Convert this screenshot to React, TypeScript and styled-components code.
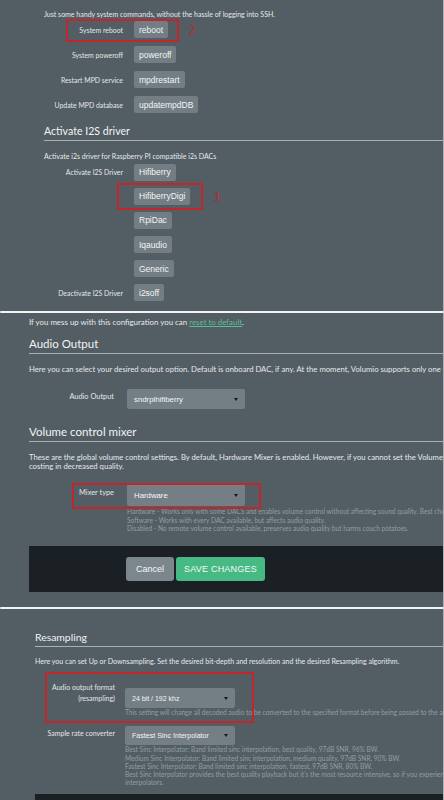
import React from "react";
import styled, { createGlobalStyle } from "styled-components";

const GlobalStyle = createGlobalStyle`
  html, body {
    margin: 0;
    padding: 0;
    background: #525d64;
  }
  body {
    width: 444px;
    overflow: hidden;
    font-family: Lato, "Open Sans", sans-serif;
    color: #e6e9eb;
  }
`;

const Page = styled.div`
  display: flex;
  flex-direction: column;
  width: 444px;
  height: 800px;
  overflow: hidden;
`;

const Panel = styled.section<{ $left: number; $top: number; $bottom: number }>`
  display: flex;
  flex-direction: column;
  align-items: stretch;
  flex: 0 0 auto;
  background: #525d64;
  border-right: 1px solid #adb3b7;
  padding: ${(p) => p.$top}px 0 ${(p) => p.$bottom}px ${(p) => p.$left}px;
  white-space: nowrap;
  overflow: hidden;
`;

const LastPanel = styled(Panel)`
  flex: 1 1 auto;
`;

const Divider = styled.div`
  flex: 0 0 auto;
  height: 2px;
  background: #f3f4f4;
  border-radius: 1px;
`;

const Title = styled.h2<{ $size: number; $mt: number; $lh: number }>`
  margin: ${(p) => p.$mt}px 0 0;
  font-weight: 400;
  font-size: ${(p) => p.$size}px;
  line-height: ${(p) => p.$lh}px;
  color: #f2f4f5;
  padding-bottom: 2px;
  border-bottom: 1px solid #a9b0b4;
`;

const Note = styled.p<{ $size: number; $mt?: number; $lh?: number }>`
  margin: ${(p) => p.$mt ?? 0}px 0 0;
  font-size: ${(p) => p.$size}px;
  line-height: ${(p) => p.$lh ?? 10}px;
`;

const ResetLink = styled.a`
  color: #5bbd93;
  text-decoration: underline;
`;

const Stack = styled.div<{ $gap: number; $mt: number }>`
  display: flex;
  flex-direction: column;
  gap: ${(p) => p.$gap}px;
  margin-top: ${(p) => p.$mt}px;
`;

const Row = styled.div<{ $label: number; $gap: number; $mt?: number }>`
  position: relative;
  display: grid;
  grid-template-columns: ${(p) => p.$label}px auto;
  column-gap: ${(p) => p.$gap}px;
  align-items: start;
  justify-content: start;
  margin-top: ${(p) => p.$mt ?? 0}px;
`;

const Label = styled.span<{ $size: number; $pt: number; $lh?: number }>`
  text-align: right;
  font-size: ${(p) => p.$size}px;
  line-height: ${(p) => p.$lh ?? 10}px;
  padding-top: ${(p) => p.$pt}px;
  color: #e3e7e9;
`;

const CommandButton = styled.span`
  display: inline-flex;
  align-items: center;
  justify-self: start;
  height: 17px;
  padding: 0 5px;
  border-radius: 2px;
  background: #727d84;
  font-family: "Liberation Sans", Arial, sans-serif;
  font-size: 8.5px;
  color: #f3f5f6;
`;

const Control = styled.div<{ $mt?: number }>`
  display: flex;
  flex-direction: column;
  margin-top: ${(p) => p.$mt ?? 0}px;
`;

const Select = styled.div<{ $w: number; $h: number; $size: number }>`
  display: flex;
  align-items: center;
  justify-content: space-between;
  box-sizing: border-box;
  width: ${(p) => p.$w}px;
  height: ${(p) => p.$h}px;
  padding: 0 7px;
  border-radius: 2px;
  background: #737e85;
  font-family: "Liberation Sans", Arial, sans-serif;
  font-size: ${(p) => p.$size}px;
  color: #f5f6f7;
`;

const Caret = styled.span`
  width: 0;
  height: 0;
  border-left: 2.5px solid transparent;
  border-right: 2.5px solid transparent;
  border-top: 3px solid #15191c;
`;

const Help = styled.p<{ $lh: number; $mt?: number }>`
  margin: ${(p) => p.$mt ?? 0}px 0 0;
  font-size: 6.6px;
  line-height: ${(p) => p.$lh}px;
  color: #939da3;
`;

const ActionBar = styled.div<{ $mt: number; $h: number; $pl: number }>`
  display: flex;
  align-items: center;
  gap: 2px;
  flex: 0 0 auto;
  height: ${(p) => p.$h}px;
  margin-top: ${(p) => p.$mt}px;
  padding-left: ${(p) => p.$pl}px;
  background: #1b2025;
`;

const ActionButton = styled.span<{ $primary?: boolean; $w: number }>`
  display: inline-flex;
  align-items: center;
  justify-content: center;
  width: ${(p) => p.$w}px;
  height: 24px;
  border-radius: 3px;
  background: ${(p) => (p.$primary ? "#47b982" : "#7c878d")};
  font-family: "Liberation Sans", Arial, sans-serif;
  font-size: 9px;
  letter-spacing: ${(p) => (p.$primary ? "0.2px" : "0")};
  color: #f6f8f8;
`;

/* red callout boxes drawn over a settings row */
const Callout = styled.div<{ $l: number; $t: number; $w: number; $h: number }>`
  position: absolute;
  left: ${(p) => p.$l}px;
  top: ${(p) => p.$t}px;
  width: ${(p) => p.$w}px;
  height: ${(p) => p.$h}px;
  box-sizing: border-box;
  border: 2px solid #c1262d;
  pointer-events: none;
`;

const CalloutNumber = styled.span<{ $dx: number }>`
  position: absolute;
  left: calc(100% + ${(p) => p.$dx}px);
  top: 50%;
  transform: translateY(-50%);
  font-family: "Liberation Sans", Arial, sans-serif;
  font-size: 12px;
  color: #c8232b;
`;

const commands = [
  { label: "System reboot", action: "reboot" },
  { label: "System poweroff", action: "poweroff" },
  { label: "Restart MPD service", action: "mpdrestart" },
  { label: "Update MPD database", action: "updatempdDB" },
];

const drivers = [
  { label: "Activate I2S Driver", action: "Hifiberry" },
  { label: "", action: "HifiberryDigi" },
  { label: "", action: "RpiDac" },
  { label: "", action: "Iqaudio" },
  { label: "", action: "Generic" },
  { label: "Deactivate I2S Driver", action: "i2soff" },
];

const SystemPanel = () => (
  <Panel $left={44} $top={9} $bottom={10}>
    <Note $size={7}>Just some handy system commands, without the hassle of logging into SSH.</Note>
    <Stack $gap={8} $mt={2}>
      {commands.map((c, i) => (
        <Row key={c.action} $label={79} $gap={11}>
          <Label $size={6.9} $pt={3.5}>{c.label}</Label>
          <CommandButton>{c.action}</CommandButton>
          {i === 0 && (
            <Callout $l={22} $t={-2.5} $w={113} $h={23}>
              <CalloutNumber $dx={12}>2</CalloutNumber>
            </Callout>
          )}
        </Row>
      ))}
    </Stack>
    <Title $size={10.6} $lh={14} $mt={11}>Activate I2S driver</Title>
    <Note $size={7} $mt={10}>Activate i2s driver for Raspberry PI compatible i2s DACs</Note>
    <Stack $gap={7.2} $mt={2.5}>
      {drivers.map((d, i) => (
        <Row key={d.action} $label={79} $gap={11}>
          <Label $size={6.9} $pt={3.5}>{d.label}</Label>
          <CommandButton>{d.action}</CommandButton>
          {i === 1 && (
            <Callout $l={73} $t={-4.7} $w={86} $h={27}>
              <CalloutNumber $dx={13}>1</CalloutNumber>
            </Callout>
          )}
        </Row>
      ))}
    </Stack>
  </Panel>
);

const PlaybackPanel = () => (
  <Panel $left={29} $top={4} $bottom={15}>
    <Note $size={7.9}>
      If you mess up with this configuration you can <ResetLink>reset to default</ResetLink>.
    </Note>
    <Title $size={11.5} $lh={15} $mt={8.5}>Audio Output</Title>
    <Note $size={7.7} $mt={10.5}>
      Here you can select your desired output option. Default is onboard DAC, if any. At the moment, Volumio supports only one Output at a time.
    </Note>
    <Row $label={85} $gap={13} $mt={15}>
      <Label $size={7.4} $pt={3}>Audio Output</Label>
      <Select $w={118} $h={20} $size={7.8}>
        sndrpihifiberry
        <Caret />
      </Select>
    </Row>
    <Title $size={11.5} $lh={15} $mt={14.5}>Volume control mixer</Title>
    <Note $size={7.7} $mt={11} $lh={9}>
      These are the global volume control settings. By default, Hardware Mixer is enabled. However, if you cannot set the Volume, switch to the Software Mixer,
      <br />
      costing in decreased quality.
    </Note>
    <Row $label={85} $gap={13} $mt={13.5}>
      <Label $size={7.4} $pt={4}>Mixer type</Label>
      <Control>
        <Select $w={118} $h={22} $size={7.8}>
          Hardware
          <Caret />
        </Select>
        <Help $lh={8.5} $mt={1}>
          Hardware - Works only with some DACS and enables volume control without affecting sound quality. Best choice if available.
          <br />
          Software - Works with every DAC available, but affects audio quality.
          <br />
          Disabled - No remote volume control available, preserves audio quality but harms couch potatoes.
        </Help>
      </Control>
      <Callout $l={43} $t={-1} $w={189} $h={26} />
    </Row>
    <ActionBar $mt={13.5} $h={46} $pl={97}>
      <ActionButton $w={48}>Cancel</ActionButton>
      <ActionButton $primary $w={89}>SAVE CHANGES</ActionButton>
    </ActionBar>
  </Panel>
);

const ResamplingPanel = () => (
  <LastPanel $left={35} $top={21} $bottom={0}>
    <Title $size={10.4} $lh={14} $mt={0}>Resampling</Title>
    <Note $size={7.05} $mt={10}>
      Here you can set Up or Downsampling. Set the desired bit-depth and resolution and the desired Resampling algorithm.
    </Note>
    <Row $label={80} $gap={10} $mt={15}>
      <Label $size={7} $pt={0} $lh={10.5}>
        Audio output format
        <br />
        (resampling)
      </Label>
      <Control $mt={6}>
        <Select $w={110} $h={20} $size={7}>
          24 bit / 192 khz
          <Caret />
        </Select>
        <Help $lh={8}>
          This setting will change all decoded audio to be converted to the specified format before being passed to the audio output.
        </Help>
      </Control>
      <Callout $l={10} $t={-10} $w={209} $h={51} />
    </Row>
    <Row $label={80} $gap={10} $mt={10}>
      <Label $size={7} $pt={2}>Sample rate converter</Label>
      <Control>
        <Select $w={110} $h={19} $size={7.1}>
          Fastest Sinc Interpolator
          <Caret />
        </Select>
        <Help $lh={8.2}>
          Best Sinc Interpolator: Band limited sinc interpolation, best quality, 97dB SNR, 96% BW.
          <br />
          Medium Sinc Interpolator: Band limited sinc interpolation, medium quality, 97dB SNR, 90% BW.
          <br />
          Fastest Sinc Interpolator: Band limited sinc interpolation, fastest, 97dB SNR, 80% BW.
          <br />
          Best Sinc Interpolator provides the best quality playback but it's the most resource intensive, so if you experience drop outs, try one of the lighter
          <br />
          interpolators.
        </Help>
      </Control>
    </Row>
    <ActionBar $mt={8} $h={46} $pl={90} />
  </LastPanel>
);

export default function App() {
  return (
    <Page>
      <GlobalStyle />
      <SystemPanel />
      <Divider />
      <PlaybackPanel />
      <Divider />
      <ResamplingPanel />
    </Page>
  );
}
